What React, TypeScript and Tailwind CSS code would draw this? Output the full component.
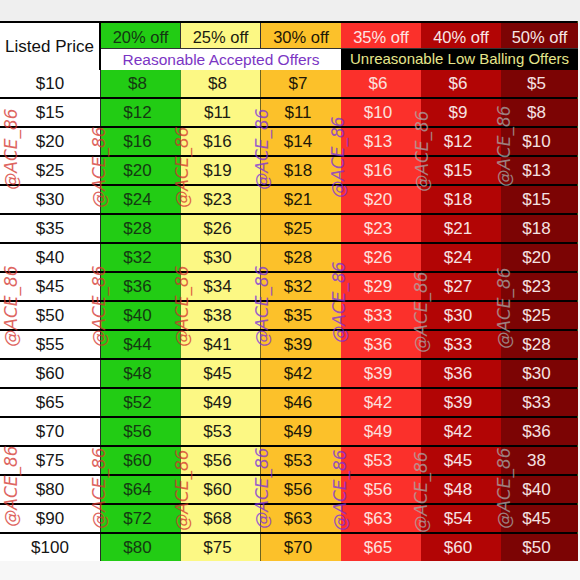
import React from 'react';

type Col = {
  label: string;
  head: string;
  cell: string;
};

// discount columns, left to right
const COLS: Col[] = [
  { label: '20% off', head: 'bg-[#22cc14] text-[#133612] border-r border-[#3a9a28]', cell: 'bg-[#22cc14] text-[#143a12] border-r border-[#3a9a28]' },
  { label: '25% off', head: 'bg-[#fcf884] text-[#1c1c10] border-r border-[#6e6420]', cell: 'bg-[#fcf884] text-[#1c1c14] border-r border-[#6e6420]' },
  { label: '30% off', head: 'bg-[#fcc12a] text-[#1e1606]', cell: 'bg-[#fcc12a] text-[#201808]' },
  { label: '35% off', head: 'bg-[#fb302b] text-[#fbe4e2]', cell: 'bg-[#fb302b] text-[#fbe0de]' },
  { label: '40% off', head: 'bg-[#b20505] text-[#f8e6e6]', cell: 'bg-[#b20505] text-[#f6e2e2]' },
  { label: '50% off', head: 'bg-[#7c0404] text-[#f6e6e6]', cell: 'bg-[#7c0404] text-[#f4e2e2]' },
];

const ROWS: [string, string[]][] = [
  ['$10', ['$8', '$8', '$7', '$6', '$6', '$5']],
  ['$15', ['$12', '$11', '$11', '$10', '$9', '$8']],
  ['$20', ['$16', '$16', '$14', '$13', '$12', '$10']],
  ['$25', ['$20', '$19', '$18', '$16', '$15', '$13']],
  ['$30', ['$24', '$23', '$21', '$20', '$18', '$15']],
  ['$35', ['$28', '$26', '$25', '$23', '$21', '$18']],
  ['$40', ['$32', '$30', '$28', '$26', '$24', '$20']],
  ['$45', ['$36', '$34', '$32', '$29', '$27', '$23']],
  ['$50', ['$40', '$38', '$35', '$33', '$30', '$25']],
  ['$55', ['$44', '$41', '$39', '$36', '$33', '$28']],
  ['$60', ['$48', '$45', '$42', '$39', '$36', '$30']],
  ['$65', ['$52', '$49', '$46', '$42', '$39', '$33']],
  ['$70', ['$56', '$53', '$49', '$49', '$42', '$36']],
  ['$75', ['$60', '$56', '$53', '$53', '$45', '38']],
  ['$80', ['$64', '$60', '$56', '$56', '$48', '$40']],
  ['$90', ['$72', '$68', '$63', '$63', '$54', '$45']],
  ['$100', ['$80', '$75', '$70', '$65', '$60', '$50']],
];

type Mark = { x: number; y: number; tone: 'red' | 'purple' | 'gray' };

const TONES = {
  red: 'text-[#d4322c]',
  purple: 'text-[#7a2ee0]',
  gray: 'text-[#a8a8a8]',
};

// watermark centres, three bands down the sheet
const MARKS: Mark[] = [
  { x: 11, y: 149, tone: 'red' },
  { x: 99, y: 167, tone: 'red' },
  { x: 182, y: 167, tone: 'red' },
  { x: 262, y: 149, tone: 'purple' },
  { x: 338, y: 157, tone: 'purple' },
  { x: 422, y: 151, tone: 'gray' },
  { x: 504, y: 146, tone: 'gray' },

  { x: 11, y: 306, tone: 'red' },
  { x: 99, y: 306, tone: 'red' },
  { x: 182, y: 306, tone: 'red' },
  { x: 262, y: 306, tone: 'purple' },
  { x: 339, y: 302, tone: 'purple' },
  { x: 421, y: 312, tone: 'gray' },
  { x: 504, y: 308, tone: 'gray' },

  { x: 11, y: 486, tone: 'red' },
  { x: 99, y: 488, tone: 'red' },
  { x: 182, y: 490, tone: 'red' },
  { x: 262, y: 488, tone: 'purple' },
  { x: 340, y: 490, tone: 'purple' },
  { x: 421, y: 492, tone: 'gray' },
  { x: 504, y: 488, tone: 'gray' },
];

const GRID = 'grid grid-cols-[101px_80px_80px_80px_80px_80px_77px]';

export default function App() {
  return (
    <div
      className="relative w-[580px] h-[580px] overflow-hidden bg-[#f7f7f7]"
      style={{ fontFamily: '"Liberation Sans", Arial, sans-serif' }}
    >
      <div className="h-[21px] bg-[#efefef]" />

      <div className="w-[578px] border-r border-[#3d4a10]">
        {/* Header */}
        <div className={`${GRID} h-[47px] border-t-2 border-black`}>
          <div className="row-span-2 flex items-center justify-center bg-white border-r-2 border-black text-[17px] text-[#111]">
            Listed Price
          </div>
          {COLS.map(col => (
            <div
              key={col.label}
              className={`flex items-center justify-center h-[26px] pt-1 text-[16.5px] border-b border-[#333] ${col.head}`}
            >
              {col.label}
            </div>
          ))}
          <div className="col-span-3 flex items-center justify-center h-[21px] bg-white text-[15.5px] text-[#7b35c4]">
            Reasonable Accepted Offers
          </div>
          <div className="col-span-3 flex items-center justify-center h-[21px] bg-black text-[15px] text-[#e6e68c]">
            Unreasonable Low Balling Offers
          </div>
        </div>

        {/* Rows */}
        {ROWS.map(([price, offers]) => (
          <div key={price} className={`${GRID} h-[29px] border-t-2 border-black`}>
            <div className="flex items-center justify-center bg-white border-r border-[#2a2a2a] text-[17px] text-[#151515]">
              {price}
            </div>
            {offers.map((v, i) => (
              <div
                key={i}
                className={`flex items-center justify-center pr-1.5 text-[17px] ${COLS[i].cell}`}
              >
                {v}
              </div>
            ))}
          </div>
        ))}
      </div>

      {/* Watermarks */}
      {MARKS.map((m, i) => (
        <span
          key={i}
          className={`absolute -translate-x-1/2 -translate-y-1/2 -rotate-90 whitespace-nowrap italic text-[17px] leading-none opacity-75 ${TONES[m.tone]}`}
          style={{ left: m.x, top: m.y, fontFamily: '"DejaVu Sans", sans-serif', fontWeight: 200 }}
        >
          @ACE_86
        </span>
      ))}
    </div>
  );
}
